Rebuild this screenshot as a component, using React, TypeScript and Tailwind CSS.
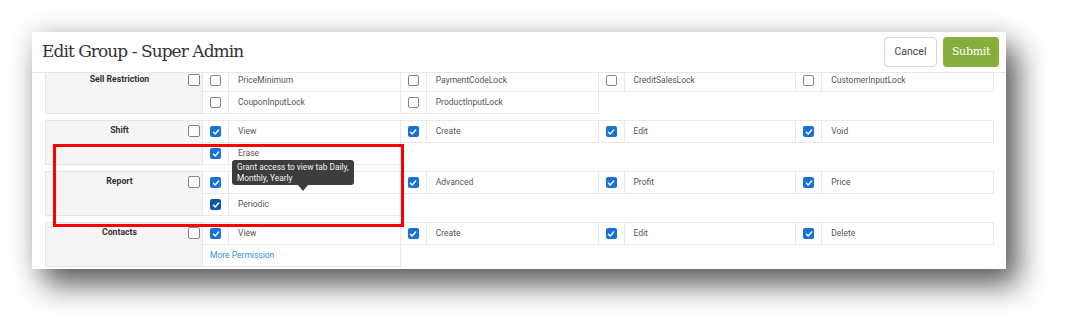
import React from "react";

type Perm = { label: string; checked?: boolean; dark?: boolean; link?: boolean };
type Group = { name: string; perms: Perm[] };

const groups: Group[] = [
  {
    name: "Sell Restriction",
    perms: [
      { label: "PriceMinimum" },
      { label: "PaymentCodeLock" },
      { label: "CreditSalesLock" },
      { label: "CustomerInputLock" },
      { label: "CouponInputLock" },
      { label: "ProductInputLock" },
    ],
  },
  {
    name: "Shift",
    perms: [
      { label: "View", checked: true },
      { label: "Create", checked: true },
      { label: "Edit", checked: true },
      { label: "Void", checked: true },
      { label: "Erase", checked: true },
    ],
  },
  {
    name: "Report",
    perms: [
      { label: "", checked: true },
      { label: "Advanced", checked: true },
      { label: "Profit", checked: true },
      { label: "Price", checked: true },
      { label: "Periodic", checked: true, dark: true },
    ],
  },
  {
    name: "Contacts",
    perms: [
      { label: "View", checked: true },
      { label: "Create", checked: true },
      { label: "Edit", checked: true },
      { label: "Delete", checked: true },
      { label: "More Permission", link: true },
    ],
  },
];

function Box({ checked, dark, big }: { checked?: boolean; dark?: boolean; big?: boolean }) {
  const size = big ? "w-[12px] h-[12px]" : "w-[11px] h-[11px]";
  if (checked) {
    return (
      <span
        className={`${size} rounded-[2px] flex items-center justify-center shrink-0 ${
          dark ? "bg-[#0c57ad]" : "bg-[#1672d8]"
        }`}
      >
        <svg width="8" height="8" viewBox="0 0 10 10">
          <path d="M1.8 5.4 L4 7.5 L8.3 2.6" stroke="white" strokeWidth="1.8" fill="none" strokeLinecap="round" strokeLinejoin="round" />
        </svg>
      </span>
    );
  }
  return <span className={`${size} rounded-[2px] border border-[#858585] bg-white shrink-0 block`} />;
}

function Cell({ p }: { p: Perm }) {
  if (p.link) {
    return (
      <div className="w-1/4 h-[22px] flex items-center border-r border-b border-[#e9e9e9] pl-[7px]">
        <span className="text-[8.5px] text-[#3b8fd4] font-['Roboto',sans-serif]">{p.label}</span>
      </div>
    );
  }
  return (
    <div className="w-1/4 h-[22px] flex border-r border-b border-[#e9e9e9]">
      <div className="w-[26px] shrink-0 border-r border-[#e9e9e9] flex items-center justify-center">
        <Box checked={p.checked} dark={p.dark} />
      </div>
      <div className="pl-[9px] flex items-center text-[8.5px] text-[#555] font-['Roboto',sans-serif]">{p.label}</div>
    </div>
  );
}

function GroupRow({ g }: { g: Group }) {
  return (
    <div className="flex">
      <div className="w-[158px] shrink-0 bg-[#f5f5f5] border border-[#e6e6e6] flex items-start">
        <div className="flex-1 text-center pl-[5px] pt-[4px] text-[8.7px] leading-[11px] font-bold text-[#333] font-['Roboto',sans-serif]">
          {g.name}
        </div>
        <div className="mt-[4px] mr-[2px]">
          <Box big />
        </div>
      </div>
      <div className="flex-1 flex flex-wrap content-start border-t border-[#e9e9e9]">
        {g.perms.map((p, i) => (
          <Cell key={i} p={p} />
        ))}
      </div>
    </div>
  );
}

export default function App() {
  return (
    <div className="relative w-[1072px] h-[335px] bg-white overflow-hidden pt-[32px] pl-[32px]">
      <div className="w-[974px] bg-white shadow-[0_-2px_22px_rgba(0,0,0,0.12),12px_16px_28px_rgba(0,0,0,0.62)]">
        <div className="h-[41px] border-b border-[#e6e6e6] flex items-center justify-between pl-[10px] pr-[7px]">
          <h1 className="text-[17px] tracking-[-0.95px] text-[#333] font-['DejaVu_Serif',serif]">Edit Group - Super Admin</h1>
          <div className="flex gap-[6px]">
            <button className="w-[53px] h-[30px] border border-[#d9d9d9] rounded-[4px] bg-white text-[10.5px] text-[#444] font-['Roboto',sans-serif]">
              Cancel
            </button>
            <button className="w-[56px] h-[30px] rounded-[4px] bg-[#87ad3c] text-[11px] tracking-[-0.3px] text-white font-['DejaVu_Serif',serif]">
              Submit
            </button>
          </div>
        </div>
        <div className="relative h-[196px] overflow-hidden pl-[13px] pr-[12px]">
          <div className="-mt-[4px] flex flex-col gap-[6px]">
            {groups.map((g) => (
              <GroupRow key={g.name} g={g} />
            ))}
          </div>
          <div className="absolute left-[200px] top-[87px] w-[122px] h-[25px] bg-[#3d3d3d] rounded-[3px] pl-[5px] pt-[2px] text-[8.3px] leading-[11px] text-[#f2f2f2] font-['Roboto',sans-serif]">
            Grant access to view tab Daily,
            <br />
            Monthly, Yearly
            <span className="absolute left-[66px] top-[25px] w-0 h-0 border-l-[5px] border-r-[5px] border-t-[6px] border-l-transparent border-r-transparent border-t-[#3d3d3d]" />
          </div>
        </div>
      </div>
      <div className="absolute left-[53px] top-[144px] w-[351px] h-[83px] border-[3px] border-[#ff0000]" />
    </div>
  );
}
